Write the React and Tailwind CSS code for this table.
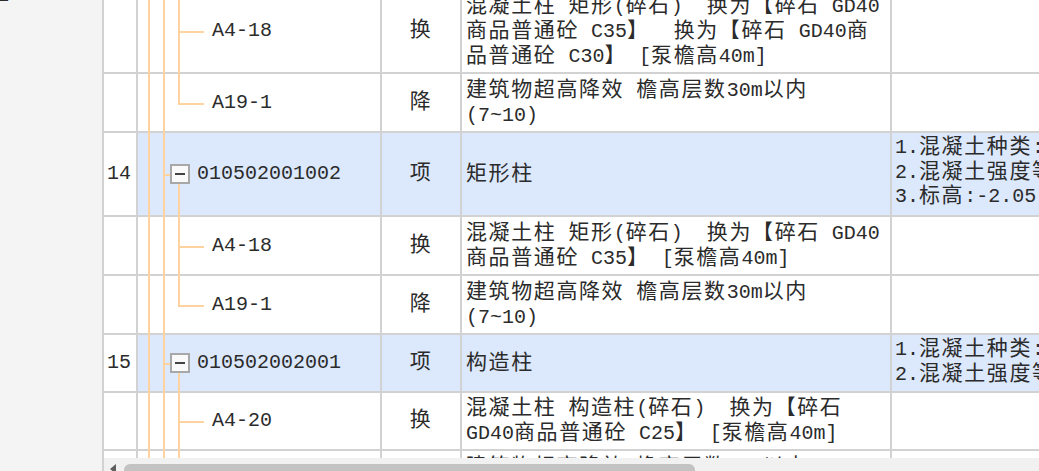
import React from "react";

const CJK = /([\u4e00-\u9fff\u3000-\u303f\uff01-\uff5e]+)/;

// SimSun-like metrics: latin half width, ideographs full width
function T({ s }) {
  return s.split(CJK).map((p, i) =>
    CJK.test(p) ? (
      <span key={i} className="text-[21px] tracking-[1.6px]">
        {p}
      </span>
    ) : (
      <React.Fragment key={i}>{p}</React.Fragment>
    )
  );
}

function Lines({ lines }) {
  return (
    <div className="leading-[25px] whitespace-pre">
      {lines.map((l, i) => (
        <div key={i}>
          <T s={l} />
        </div>
      ))}
    </div>
  );
}

function Tree({ kind }) {
  const line = "absolute w-[2px] bg-[#fed3a0]";
  return (
    <>
      <div className={line + " left-[10px] top-0 -bottom-[2px]"} />
      <div className={line + " left-[25px] top-0 -bottom-[2px]"} />
      {kind === "item" && (
        <>
          <div className="absolute left-[25px] top-1/2 h-[2px] w-[7px] bg-[#fed3a0]" />
          <div className={line + " left-[40px] top-[calc(50%+10px)] -bottom-[2px]"} />
          <div className="absolute left-[32px] top-1/2 flex h-[20px] w-[20px] -translate-y-1/2 items-center justify-center border-2 border-[#a8a8a8] bg-[#fafafa]">
            <div className="h-[2px] w-[10px] bg-[#444]" />
          </div>
        </>
      )}
      {kind === "child" && <div className={line + " left-[40px] top-0 -bottom-[2px]"} />}
      {kind === "last" && <div className={line + " left-[40px] top-0 h-1/2"} />}
      {kind !== "item" && (
        <div className="absolute left-[40px] top-1/2 h-[2px] w-[26px] bg-[#fed3a0]" />
      )}
    </>
  );
}

function Row({ h, num, kind, code, type, name, feat }) {
  const item = kind === "item";
  const bg = item ? "bg-[#dce8fb]" : "bg-white";
  const cell = "border-r-2 border-b-2 border-[#d2d2d2]";
  return (
    <div className={"grid grid-cols-[34px_244px_80px_430px_1fr] " + h}>
      <div className={cell + " flex items-center bg-white pl-[3px]"}>{num}</div>
      <div className={cell + " relative flex items-center " + bg + (item ? " pl-[59px]" : " pl-[74px]")}>
        <Tree kind={kind} />
        <span className="relative">{code}</span>
      </div>
      <div className={cell + " flex items-center justify-center " + bg}>
        <T s={type} />
      </div>
      <div className={cell + " flex items-center px-[4px] " + bg}>
        <Lines lines={name} />
      </div>
      <div className={"border-b-2 border-[#d2d2d2] overflow-hidden whitespace-nowrap pl-[3px] pt-[3px] leading-[24.5px] " + bg}>
        {(feat || []).map((f, i) => (
          <div key={i}>
            <T s={f} />
          </div>
        ))}
      </div>
    </div>
  );
}

const rows = [
  {
    h: "h-[84px]",
    kind: "child",
    code: "A4-18",
    type: "换",
    name: ["混凝土柱 矩形(碎石)  换为【碎石 GD40", "商品普通砼 C35】  换为【碎石 GD40商", "品普通砼 C30】 [泵檐高40m]"],
  },
  { h: "h-[59px]", kind: "last", code: "A19-1", type: "降", name: ["建筑物超高降效 檐高层数30m以内", "(7~10)"] },
  {
    h: "h-[84px]",
    num: "14",
    kind: "item",
    code: "010502001002",
    type: "项",
    name: ["矩形柱"],
    feat: ["1.混凝土种类:商品混凝土", "2.混凝土强度等级:C30", "3.标高:-2.05-20.95m"],
  },
  { h: "h-[59px]", kind: "child", code: "A4-18", type: "换", name: ["混凝土柱 矩形(碎石)  换为【碎石 GD40", "商品普通砼 C35】 [泵檐高40m]"] },
  { h: "h-[59px]", kind: "last", code: "A19-1", type: "降", name: ["建筑物超高降效 檐高层数30m以内", "(7~10)"] },
  {
    h: "h-[58px]",
    num: "15",
    kind: "item",
    code: "010502002001",
    type: "项",
    name: ["构造柱"],
    feat: ["1.混凝土种类:商品混凝土", "2.混凝土强度等级:C25"],
  },
  { h: "h-[58px]", kind: "child", code: "A4-20", type: "换", name: ["混凝土柱 构造柱(碎石)  换为【碎石", "GD40商品普通砼 C25】 [泵檐高40m]"] },
  { h: "h-[59px]", kind: "last", code: "A19-1", type: "降", name: ["建筑物超高降效 檐高层数30m以内", "(7~10)"] },
];

export default function App() {
  return (
    <div className="flex h-[471px] w-[1039px] overflow-hidden bg-white font-['Liberation_Mono','Noto_Sans_CJK_SC',monospace] text-[20px] text-[#2b2b2b]">
      {/* left tree panel */}
      <aside className="w-[104px] shrink-0 overflow-hidden border-r-2 border-[#d2d2d2] bg-[#f4f4f4]">
        <div className="-ml-[12px] -mt-[18px] text-[20px] leading-[24px]">
          <T s="量" />
        </div>
      </aside>

      {/* grid */}
      <div className="flex min-w-0 flex-1 flex-col">
        <div className="h-[458px] overflow-hidden">
          <div className="-mt-[10px]">
            {rows.map((r, i) => (
              <Row key={i} {...r} />
            ))}
          </div>
        </div>
        {/* horizontal scrollbar */}
        <div className="flex h-[13px] items-start gap-[7px] overflow-hidden bg-[#f1f1f1] pl-[5px] pt-[6px]">
          <svg width="8" height="10" viewBox="0 0 8 10" className="shrink-0">
            <polygon points="7,0 7,10 1,5" fill="#5f5f5f" />
          </svg>
          <div className="h-[12px] w-[571px] shrink-0 rounded-[6px] bg-[#c3c3c3]" />
        </div>
      </div>
    </div>
  );
}
